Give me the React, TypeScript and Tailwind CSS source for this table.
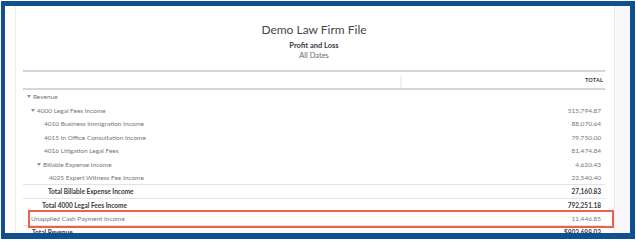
import React from "react";

type Row = {
  label: string;
  amount: string;
  indent: number;
  caret?: boolean;
  bold?: boolean;
  line?: boolean;
  flagged?: boolean;
};

const rows: Row[] = [
  { label: "Revenue", amount: "", indent: 4, caret: true },
  { label: "4000 Legal Fees Income", amount: "515,794.87", indent: 8, caret: true },
  { label: "4010 Business Immigration Income", amount: "88,070.64", indent: 21 },
  { label: "4015 In Office Consultation Income", amount: "79,750.00", indent: 21 },
  { label: "4016 Litigation Legal Fees", amount: "81,474.84", indent: 21 },
  { label: "Billable Expense Income", amount: "4,620.43", indent: 14, caret: true },
  { label: "4025 Expert Witness Fee Income", amount: "22,540.40", indent: 26, line: true },
  { label: "Total Billable Expense Income", amount: "27,160.83", indent: 25, bold: true, line: true },
  { label: "Total 4000 Legal Fees Income", amount: "792,251.18", indent: 19, bold: true },
  { label: "Unapplied Cash Payment Income", amount: "11,446.85", indent: 8, line: true, flagged: true },
  { label: "Total Revenue", amount: "$803,698.03", indent: 9, bold: true },
];

function Caret() {
  return (
    <svg width="4" height="3" viewBox="0 0 4 3" className="mr-[2px] shrink-0">
      <path d="M0 0h4L2 3z" fill="#8d9096" />
    </svg>
  );
}

function ReportRow({ row }: { row: Row }) {
  return (
    <div
      className={`relative flex h-[13.6px] items-center justify-between pr-[4px] ${
        row.line ? "border-b border-[#e3e3e6]" : ""
      } ${row.bold ? "font-bold text-[#393a3d]" : "text-[#75767b]"}`}
    >
      <div className="flex items-center" style={{ paddingLeft: row.indent }}>
        {row.caret && <Caret />}
        <span>{row.label}</span>
      </div>
      <span>{row.amount}</span>
      {row.flagged && (
        <div className="absolute left-[5px] right-[-9px] top-[-2px] bottom-[-3px] border-2 border-[#ef5f4a]" />
      )}
    </div>
  );
}

export default function App() {
  return (
    <div className="h-[241px] w-[636px] bg-white pt-[1px] pl-[1px] pr-[1px] font-['Lato',sans-serif]">
      <div className="flex h-[238px] overflow-hidden border-b-[6px] border-l-4 border-r-[5px] border-t-[5px] border-[#0f4f92] bg-white">
        <div className="w-[10px] shrink-0" />
        <div className="flex-1 border-l border-r border-[#ececef] pl-[7px] pr-[9px]">
          <div className="pt-[15px] text-center">
            <div className="text-[12px] leading-[17px] text-[#45464a]">Demo Law Firm File</div>
            <div className="mt-[3px] text-[7.5px] font-bold leading-[10px] text-[#393a3d]">Profit and Loss</div>
            <div className="text-[7.5px] leading-[10px] text-[#6b6c72]">All Dates</div>
          </div>

          <div className="mt-[9px] flex h-[20px] items-stretch border-y-2 border-[#d6d6d9]">
            <div className="w-[379px] border-r-2 border-[#f1f1f3] mt-[4px]" />
            <div className="flex flex-1 items-center justify-end pr-[2px] text-[5.5px] font-bold tracking-[0.2px] text-[#393a3d]">
              TOTAL
            </div>
          </div>

          <div className="text-[6.5px]">
            {rows.map((row) => (
              <ReportRow key={row.label} row={row} />
            ))}
          </div>
        </div>
        <div className="w-[15px] shrink-0 bg-[#f8f8fa]" />
      </div>
    </div>
  );
}
